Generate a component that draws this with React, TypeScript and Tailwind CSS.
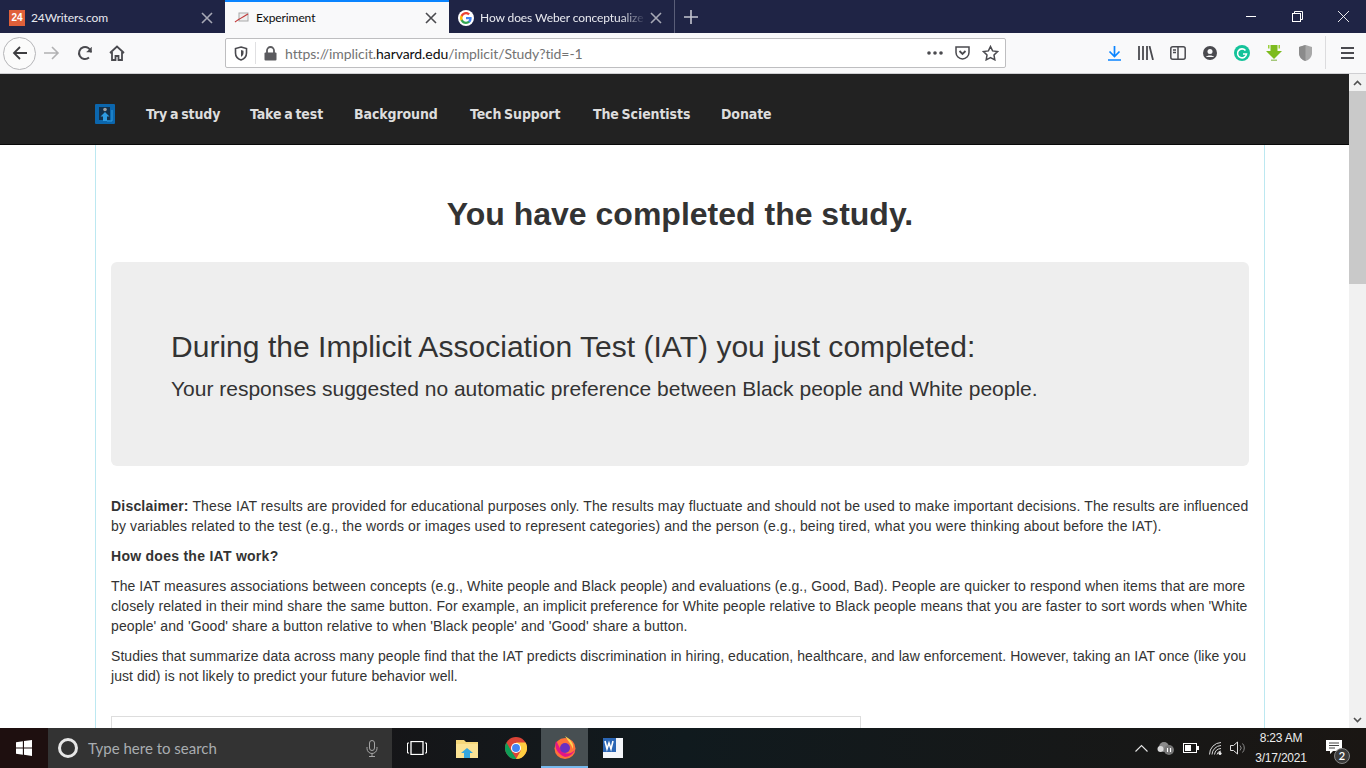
import React from "react";

const sans = { fontFamily: '"Liberation Sans", Arial, sans-serif' };
const ui = '"Lato", "Open Sans", sans-serif';

function Tab({ active, icon, title, fade, border, width }: { active?: boolean; icon: React.ReactNode; title: string; fade?: boolean; border?: boolean; width: string }) {
  return (
    <div className={`${width} h-[33px] relative flex items-center shrink-0 ${active ? "bg-[#f9f9fa] border-t-2 border-[#0a84ff] text-[#0c0c0d]" : "text-[#e8e9ef] pt-[2px]"} ${border ? "border-r border-[#5a5e78]" : ""}`}>
      <div className="w-4 h-4 shrink-0 ml-[9px]">{icon}</div>
      <span className="ml-[6px] text-[12px] tracking-[-0.1px] whitespace-nowrap overflow-hidden flex-1" style={{ fontFamily: ui, ...(fade ? { WebkitMaskImage: "linear-gradient(to right,#000 85%,transparent)" } : {}) }}>{title}</span>
      <svg width="12" height="12" viewBox="0 0 12 12" className="mr-[12px] ml-1 shrink-0">
        <path d="M1 1l10 10M11 1L1 11" stroke={active ? "#4a4a4f" : "#a6a8b5"} strokeWidth="1.6" />
      </svg>
    </div>
  );
}

function NavLink({ children, w }: { children: string; w: string }) {
  return <span className={`${w} text-[14px] font-bold text-[#dddddd] whitespace-nowrap tracking-[-0.1px]`} style={{ fontFamily: '"DejaVu Sans Condensed", "Noto Sans", sans-serif', wordSpacing: "-1.5px" }}>{children}</span>;
}

export default function App() {
  return (
    <div className="w-[1366px] h-[768px] overflow-hidden flex flex-col bg-white" style={sans}>
      {/* Tab strip */}
      <div className="h-[33px] bg-[#1f2445] flex items-start shrink-0">
        <Tab width="w-[225px]" title="24Writers.com" icon={
          <div className="w-4 h-4 bg-[#e0603a] text-white text-[10px] font-bold leading-4 text-center">24</div>
        } />
        <Tab active width="w-[224px]" title="Experiment" icon={
          <svg viewBox="0 0 16 16" width="16" height="16"><rect x="5" y="3" width="9" height="8" fill="#eee" stroke="#aaa" /><path d="M1 12C5 9 9 7 14 4" stroke="#c03a3a" strokeWidth="1.2" fill="none" /></svg>
        } />
        <Tab width="w-[226px]" border fade title="How does Weber conceptualize" icon={
          <svg viewBox="0 0 48 48" width="16" height="16"><circle cx="24" cy="24" r="24" fill="#fff" /><path fill="#4285F4" d="M41 24.5c0-1.3-.1-2.5-.3-3.5H24v6.800h9.600c-.4 2.200-1.700 4-3.500 5.300v4.400h5.700c3.300-3.100 5.200-7.600 5.200-13z" /><path fill="#34A853" d="M24 42c4.800 0 8.800-1.600 11.800-4.400l-5.700-4.400c-1.600 1.100-3.600 1.700-6.100 1.700-4.600 0-8.600-3.100-10-7.400H8.100v4.600C11 37.900 17 42 24 42z" /><path fill="#FBBC05" d="M14 27.500c-.4-1.100-.6-2.300-.6-3.500s.2-2.400.6-3.500v-4.600H8.100C6.800 18.300 6 21 6 24s.8 5.700 2.100 8.100z" /><path fill="#EA4335" d="M24 13.100c2.600 0 5 .9 6.800 2.700l5.100-5.100C32.800 7.800 28.800 6 24 6 17 6 11 10.100 8.100 15.900l5.900 4.600c1.400-4.300 5.400-7.400 10-7.400z" /></svg>
        } />
        <div className="w-[32px] h-[33px] flex items-center justify-center">
          <svg width="14" height="14" viewBox="0 0 14 14"><path d="M7 0v14M0 7h14" stroke="#c4c5cf" strokeWidth="1.600" /></svg>
        </div>
        <div className="flex-1" />
        <div className="flex h-[32px] items-center">
          <div className="w-[46px] flex justify-center"><div className="w-[10px] h-px bg-white" /></div>
          <div className="w-[46px] flex justify-center">
            <svg width="11" height="11" viewBox="0 0 11 11" fill="none" stroke="#fff"><rect x="0.500" y="2.500" width="8" height="8" /><path d="M2.500 2.500v-2h8v8h-2" /></svg>
          </div>
          <div className="w-[46px] flex justify-center">
            <svg width="11" height="11" viewBox="0 0 11 11" stroke="#fff" strokeWidth="0.900"><path d="M0 0l11 11M11 0L0 11" /></svg>
          </div>
        </div>
      </div>

      {/* Toolbar */}
      <div className="h-[41px] bg-[#f9f9fa] border-b border-[#cfcfd2] flex items-center shrink-0 relative">
        <div className="w-[33px] h-[33px] ml-[3px] rounded-full border border-[#b5b5b8] bg-[#fbfbfb] flex items-center justify-center shrink-0">
          <svg width="16" height="16" viewBox="0 0 16 16" fill="none" stroke="#3d3d40" strokeWidth="1.800"><path d="M15 8H2M8 2L2 8l6 6" /></svg>
        </div>
        <svg width="16" height="16" viewBox="0 0 16 16" fill="none" stroke="#b1b1b3" strokeWidth="1.600" className="ml-[8px] shrink-0"><path d="M0 8h14M8 2l6 6-6 6" /></svg>
        <svg width="16" height="16" viewBox="0 0 16 16" fill="none" stroke="#4a4a4f" strokeWidth="2" className="ml-[17px] shrink-0"><path d="M14 7.500A6 6 0 1 0 12 12.500" /><path d="M14.500 2v5h-5" fill="#4a4a4f" strokeWidth="0.500" /></svg>
        <svg width="16" height="16" viewBox="0 0 16 16" fill="none" stroke="#4a4a4f" strokeWidth="1.800" className="ml-[16px] shrink-0"><path d="M1 8l7-6.500L15 8M3 7v8h3.500v-4h3v4H13V7" /></svg>
        {/* URL bar */}
        <div className="ml-[100px] w-[781px] h-[30px] bg-white border border-[#bebec0] rounded-[2px] flex items-center shrink-0">
          <svg width="14" height="15" viewBox="0 0 14 15" fill="none" stroke="#4a4a4f" strokeWidth="1.600" className="ml-[8px] shrink-0"><path d="M7 1l5.500 1.500V7c0 3.500-2.500 6-5.500 7-3-1-5.500-3.500-5.500-7V2.500z" /><path d="M7 4l2.500.8V7c0 2-1 3-2.500 3.800z" fill="#4a4a4f" stroke="none" /></svg>
          <div className="w-px h-[22px] bg-[#e0e0e2] ml-[7px]" />
          <svg width="13" height="15" viewBox="0 0 13 15" className="ml-[8px] shrink-0"><path d="M3 7V4.500a3.500 3.500 0 0 1 7 0V7" stroke="#5b5b5f" strokeWidth="1.800" fill="none" /><rect x="0.500" y="6.500" width="12" height="8" rx="1" fill="#5b5b5f" /></svg>
          <span className="ml-[8px] mt-[1px] text-[14px] whitespace-nowrap text-[#737373] tracking-[-0.08px]" style={{ fontFamily: ui }}>https://implicit.<span className="text-[#0c0c0d]">harvard.edu</span>/implicit/Study?tid=-1</span>
          <div className="flex-1" />
          <svg width="16" height="4" viewBox="0 0 16 4" fill="#4a4a4f" className="shrink-0"><circle cx="2" cy="2" r="1.800" /><circle cx="8" cy="2" r="1.800" /><circle cx="14" cy="2" r="1.800" /></svg>
          <svg width="15" height="14" viewBox="0 0 15 14" fill="none" stroke="#4a4a4f" strokeWidth="1.500" className="ml-[12px] shrink-0"><path d="M1 1h13v5.500c0 3.500-3 6.500-6.500 6.500S1 10 1 6.500z" /><path d="M4.500 5l3 3 3-3" strokeWidth="1.800" /></svg>
          <svg width="17" height="16" viewBox="0 0 17 16" fill="none" stroke="#4a4a4f" strokeWidth="1.500" className="ml-[12px] mr-[6px] shrink-0"><path d="M8.500 1.500l2.100 4.400 4.900.7-3.500 3.400.8 4.800-4.300-2.300-4.300 2.300.8-4.800L1.500 6.600l4.900-.7z" /></svg>
        </div>
        <div className="flex-1" />
        <svg width="13" height="15" viewBox="0 0 13 15" fill="none" stroke="#0a84ff" strokeWidth="1.700" className="shrink-0 absolute left-[1108px] top-[13px]"><path d="M6.500 0v10M1.500 5.500l5 5 5-5M0 14h13" /></svg>
        <svg width="16" height="14" viewBox="0 0 16 14" fill="none" stroke="#4a4a4f" strokeWidth="1.800" className="absolute left-[1138px] top-[13px]"><path d="M1 0v14M5 0v14M9 0v14M11.500 0l3.500 14" /></svg>
        <svg width="16" height="14" viewBox="0 0 16 14" fill="none" stroke="#4a4a4f" strokeWidth="1.500" className="absolute left-[1170px] top-[13px]"><rect x="0.800" y="0.800" width="14.400" height="12.400" rx="2" /><path d="M8 1v12" /><path d="M3 4h3M3 6.500h3" /></svg>
        <svg width="14" height="14" viewBox="0 0 14 14" className="absolute left-[1203px] top-[13px]"><circle cx="7" cy="7" r="7" fill="#4a4a4f" /><circle cx="7" cy="5.500" r="2.500" fill="#f9f9fa" /><path d="M3 11c1-2 7-2 8 0z" fill="#f9f9fa" /></svg>
        <svg width="16" height="16" viewBox="0 0 16 16" className="absolute left-[1234px] top-[12px]"><circle cx="8" cy="8" r="8" fill="#15c39a" /><path d="M11.500 5.500A4.500 4.500 0 1 0 12.500 9H9" fill="none" stroke="#fff" strokeWidth="1.600" /></svg>
        <svg width="16" height="16" viewBox="0 0 16 16" className="absolute left-[1266px] top-[12px]"><path d="M4.500 0h7v6H16l-8 8-8-8h4.500z" fill="#7dbb1e" /><path d="M2 0h1.500v3.500H2zM12.500 0H14v3.500h-1.500z" fill="#9ad03c" /><rect x="5" y="14.500" width="6" height="1.500" fill="#a5c77a" /></svg>
        <svg width="13" height="16" viewBox="0 0 13 16" className="absolute left-[1299px] top-[12px]"><path d="M6.500 0L13 2v6c0 4-3 7-6.500 8C3 15 0 12 0 8V2z" fill="#a8a8a8" /><path d="M6.500 0L0 2v6c0 4 3 7 6.500 8z" fill="#8b8b8b" /></svg>
        <div className="absolute left-[1325px] top-[3px] w-px h-[33px] bg-[#dcdcde]" />
        <svg width="13" height="12" viewBox="0 0 13 12" fill="#4a4a4f" className="absolute left-[1341px] top-[14px]"><rect width="13" height="2" /><rect y="5" width="13" height="2" /><rect y="10" width="13" height="2" /></svg>
      </div>

      {/* Page */}
      <div className="flex-1 min-h-0 flex relative">
        <div className="flex-1 min-w-0 overflow-hidden flex flex-col">
          <nav className="h-[71px] bg-[#222222] border-b border-[#080808] flex items-center shrink-0 pl-[95px] pt-[10px]">
            <svg width="20" height="20" viewBox="0 0 20 20" className="shrink-0 mr-[31px]">
              <rect width="20" height="20" rx="1" fill="#0b66ad" />
              <rect x="4" y="3" width="11" height="13" fill="#14304a" />
              <circle cx="10" cy="5.500" r="1.800" fill="#a0a0a0" />
              <path d="M10 8l4.500 4.500H12V17H8v-4.500H5.500z" fill="#2e9be2" />
              <path d="M12 17h5V6" stroke="#2e9be2" strokeWidth="1" fill="none" />
            </svg>
            <NavLink w="w-[104px]">Try a study</NavLink>
            <NavLink w="w-[104px]">Take a test</NavLink>
            <NavLink w="w-[116px]">Background</NavLink>
            <NavLink w="w-[123px]">Tech Support</NavLink>
            <NavLink w="w-[128px]">The Scientists</NavLink>
            <NavLink w="w-[60px]">Donate</NavLink>
          </nav>
          <main className="flex-1 min-h-0 overflow-hidden ml-[95px] w-[1170px] border-x border-[#bce8f1] px-[15px] text-[#333333]">
            <h1 className="text-[32px] leading-[35px] font-bold text-center mt-[52px] mb-[30px]">You have completed the study.</h1>
            <div className="bg-[#eeeeee] rounded-[6px] h-[204px] pt-[65px] px-[60px]">
              <h2 className="text-[30px] leading-[40px] tracking-[0.03px]">During the Implicit Association Test (IAT) you just completed:</h2>
              <p className="text-[21px] leading-[30px] mt-[7px]">Your responses suggested no automatic preference between Black people and White people.</p>
            </div>
            <div className="text-[14px] leading-[20px] mt-[30px]">
              <p className="mb-[10px] tracking-[0.12px]"><b className="tracking-[0.2px]">Disclaimer:</b> These IAT results are provided for educational purposes only. The results may fluctuate and should not be used to make important decisions. The results are influenced by variables related to the test (e.g., the words or images used to represent categories) and the person (e.g., being tired, what you were thinking about before the IAT).</p>
              <p className="mb-[10px] font-bold tracking-[0.27px]">How does the IAT work?</p>
              <p className="mb-[10px] tracking-[0.09px]">The IAT measures associations between concepts (e.g., White people and Black people) and evaluations (e.g., Good, Bad). People are quicker to respond when items that are more closely related in their mind share the same button. For example, an implicit preference for White people relative to Black people means that you are faster to sort words when 'White people' and 'Good' share a button relative to when 'Black people' and 'Good' share a button.</p>
              <p className="tracking-[0.06px]">Studies that summarize data across many people find that the IAT predicts discrimination in hiring, education, healthcare, and law enforcement. However, taking an IAT once (like you just did) is not likely to predict your future behavior well.</p>
            </div>
            <div className="w-[750px] h-[40px] border border-[#dddddd] mt-[30px]" />
          </main>
        </div>
        {/* Scrollbar */}
        <div className="w-[17px] bg-[#f1f1f1] flex flex-col items-center shrink-0">
          <div className="h-[17px] flex items-center justify-center">
            <svg width="9" height="6" viewBox="0 0 9 6" fill="none" stroke="#505050" strokeWidth="1.600"><path d="M1 5l3.500-3.500L8 5" /></svg>
          </div>
          <div className="w-full h-[193px] bg-[#c9c9c9]" />
          <div className="flex-1" />
          <div className="h-[17px] flex items-center justify-center">
            <svg width="9" height="6" viewBox="0 0 9 6" fill="none" stroke="#505050" strokeWidth="1.600"><path d="M1 1l3.500 3.500L8 1" /></svg>
          </div>
        </div>
      </div>

      {/* Taskbar */}
      <div className="h-[40px] shrink-0 bg-gradient-to-r from-[#1a0f10] via-[#101a1e] to-[#1a1613] flex items-center text-white" style={{ fontFamily: ui }}>
        <div className="w-[48px] h-full flex items-center justify-center bg-[#1e0f0f] shrink-0">
          <svg width="16" height="16" viewBox="0 0 14 14" fill="#fff"><path d="M0 2l6-1v5.500H0zM7 .8L14 0v6.500H7zM0 7.500h6V13l-6-1zM7 7.500h7V14l-7-1z" /></svg>
        </div>
        <div className="w-[344px] h-full bg-[#333333] flex items-center shrink-0">
          <div className="w-[20px] h-[20px] rounded-full border-[3px] border-[#e6e6e6] ml-[10px] shrink-0" />
          <span className="ml-[10px] text-[15px] text-[#a9adb1] whitespace-nowrap">Type here to search</span>
          <div className="flex-1" />
          <svg width="12" height="17" viewBox="0 0 12 17" fill="none" stroke="#a5a5a5" strokeWidth="1" className="mr-[14px] shrink-0"><rect x="3.500" y="0.500" width="5" height="10" rx="2.500" /><path d="M1 7v1.500a5 5 0 0 0 10 0V7M6 13.500v3M3 16.500h6" /></svg>
        </div>
        <div className="w-[50px] flex justify-center shrink-0">
          <svg width="20" height="14" viewBox="0 0 20 14" fill="none" stroke="#fff" strokeWidth="1"><rect x="4" y="0.500" width="12" height="13" strokeWidth="1.300" /><path d="M2 2H.500v10H2M18 2h1.500v10H18" /></svg>
        </div>
        <div className="w-[49px] flex justify-center shrink-0">
          <svg width="22" height="20" viewBox="0 0 22 20"><path d="M0 2h8l2 2h12v16H0z" fill="#f5d77a" /><rect y="6" width="22" height="14" fill="#fbe394" /><path d="M5 15l6-5 6 5h-3v5H8v-5z" fill="#36a7e0" /></svg>
        </div>
        <div className="w-[50px] flex justify-center shrink-0">
          <svg width="22" height="22" viewBox="0 0 24 24"><circle cx="12" cy="12" r="12" fill="#db4437" /><path d="M12 24A12 12 0 0 1 1.600 6L7 15.500 12.500 24z" fill="#0f9d58" /><path d="M12 6h10.400A12 12 0 0 1 12 24l5.200-9z" fill="#ffcd40" /><circle cx="12" cy="12" r="5.500" fill="#fff" /><circle cx="12" cy="12" r="4.300" fill="#4285f4" /></svg>
        </div>
        <div className="w-[47px] h-full bg-[#474f52] border-b-[2px] border-[#76b9ed] flex justify-center items-center shrink-0">
          <svg width="24" height="24" viewBox="0 0 24 24"><circle cx="12" cy="13.500" r="10.500" fill="#ff7139" /><path d="M12 1c5 3 9 7 8 13-2-5-5-8-8-13z" fill="#ffd34f" /><path d="M3 6c-2 6 1 13 9 16 4 0 8-3 10-7-3 3-7 5-12 2C7 15 6 10 3 6z" fill="#e31587" /><circle cx="12" cy="13" r="5" fill="#6a2fc0" /></svg>
        </div>
        <div className="w-[49px] flex justify-center shrink-0">
          <svg width="22" height="22" viewBox="0 0 22 22"><rect x="1" y="1" width="20" height="20" fill="#f4f6fa" /><path d="M1 1h13v14H1z" fill="#2b66b5" /><path d="M3 4l2 8 2-6 2 6 2-8" stroke="#fff" strokeWidth="1.600" fill="none" /></svg>
        </div>
        <div className="flex-1" />
        <svg width="13" height="8" viewBox="0 0 13 8" fill="none" stroke="#e5e5e5" strokeWidth="1.100" className="shrink-0 mr-[9px]"><path d="M.5 7.500l6-6 6 6" /></svg>
        <svg width="18" height="14" viewBox="0 0 18 14" className="shrink-0 mr-[8px]"><circle cx="7" cy="6" r="5" fill="#8a8a8a" /><circle cx="3.500" cy="8" r="3" fill="#d9d9d9" /><circle cx="12" cy="9" r="5" fill="#777" /><path d="M10.500 7v4M13.500 7v4" stroke="#fff" strokeWidth="1.100" /></svg>
        <svg width="16" height="10" viewBox="0 0 16 10" className="shrink-0 mr-[10px]"><rect x="0.500" y="0.500" width="13" height="9" fill="none" stroke="#fff" /><rect x="2" y="2" width="6" height="6" fill="#fff" /><rect x="14" y="3" width="2" height="4" fill="#fff" /></svg>
        <svg width="14" height="13" viewBox="0 0 14 13" fill="none" stroke="#d6d6d6" strokeWidth="1" className="shrink-0 mr-[7px]"><path d="M.5 12.500A12 12 0 0 1 12 .5M3 12.500A9.500 9.500 0 0 1 12 3.500M5.500 12.500A7 7 0 0 1 12 6.500M8 12.500A4.500 4.500 0 0 1 12 9" /><circle cx="11" cy="11.500" r="1.200" fill="#fff" /></svg>
        <svg width="16" height="14" viewBox="0 0 16 14" fill="none" stroke="#e0e0e0" strokeWidth="1" className="shrink-0 mr-[2px]"><path d="M.5 4.500h3l4-3.500v12l-4-3.500h-3z" /><path d="M10 4.500a3.500 3.500 0 0 1 0 5M12.500 2.500a6.500 6.500 0 0 1 0 9" stroke="#8a8a8a" /></svg>
        <div className="w-[66px] text-center text-[12px] leading-[20px] text-[#ececec] shrink-0 whitespace-nowrap tracking-[-0.2px]" style={sans}>
          <div>8:23 AM</div>
          <div>3/17/2021</div>
        </div>
        <div className="w-[52px] relative h-full shrink-0">
          <svg width="16" height="15" viewBox="0 0 16 15" className="absolute left-[12px] top-[12px]"><path d="M0 0h16v11H7l-3 3v-3H0z" fill="#fff" /><path d="M3 3h10M3 5.500h10M3 8h6" stroke="#444" strokeWidth="1" /></svg>
          <div className="absolute left-[20px] top-[20px] w-[16px] h-[16px] rounded-full bg-[#3a3a3a] border border-[#888] text-[11px] font-semibold leading-[14px] text-center text-white">2</div>
        </div>
      </div>
    </div>
  );
}
